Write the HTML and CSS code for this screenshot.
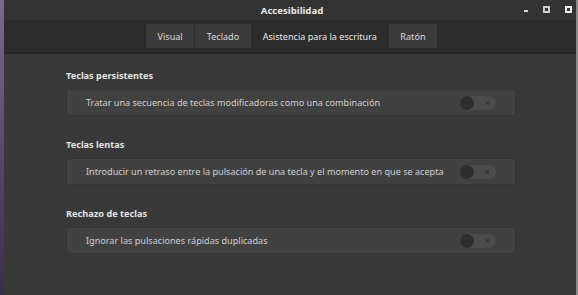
FILE: index.html
```html
<!DOCTYPE html>
<html lang="es">
<head>
  <meta charset="UTF-8" />
  <title>Accesibilidad</title>
  <link rel="stylesheet" href="styles.css">
</head>
<body>
  <div class="escritorio"></div>
  <div class="ventana">
    <div class="titulo">
      <span class="titulo-texto">Accesibilidad</span>
      <div class="controles">
        <span class="ctl-min"></span>
        <span class="ctl-max"></span>
        <span class="ctl-cerrar"></span>
      </div>
    </div>
    <div class="pestanas">
      <button class="tab">Visual</button>
      <button class="tab">Teclado</button>
      <button class="tab activa">Asistencia para la escritura</button>
      <button class="tab">Ratón</button>
    </div>
    <div class="contenido">
      <div class="seccion">
        <h2>Teclas persistentes</h2>
        <div class="fila">
          <span>Tratar una secuencia de teclas modificadoras como una combinación</span>
          <span class="interruptor"><span class="bola"></span><span class="x">×</span></span>
        </div>
      </div>
      <div class="seccion">
        <h2>Teclas lentas</h2>
        <div class="fila">
          <span>Introducir un retraso entre la pulsación de una tecla y el momento en que se acepta</span>
          <span class="interruptor"><span class="bola"></span><span class="x">×</span></span>
        </div>
      </div>
      <div class="seccion">
        <h2>Rechazo de teclas</h2>
        <div class="fila">
          <span>Ignorar las pulsaciones rápidas duplicadas</span>
          <span class="interruptor"><span class="bola"></span><span class="x">×</span></span>
        </div>
      </div>
    </div>
  </div>
</body>
</html>
```

FILE: styles.css
```css
body {
  margin: 0;
  width: 578px;
  height: 295px;
  display: flex;
  overflow: hidden;
  font-family: "Noto Sans", "Open Sans", sans-serif;
  background: #393939;
}

.escritorio {
  width: 4px;
  background: linear-gradient(#7a6a8a, #5a4a6e 50%, #3a2f48);
}

.ventana {
  flex: 1;
  display: flex;
  flex-direction: column;
  background: #393939;
  border-right: 2px solid #8a8a8a;
}

.titulo {
  height: 20px;
  background: #333333;
  display: flex;
  align-items: center;
  justify-content: center;
  position: relative;
}

.titulo-texto {
  color: #e6e6e6;
  font-size: 9.6px;
  font-weight: bold;
  margin-left: 4px;
}

.controles {
  position: absolute;
  right: 4px;
  top: 6px;
  display: flex;
  align-items: center;
  gap: 15px;
}

.ctl-min {
  width: 4px;
  height: 2px;
  background: #dddddd;
  margin-top: 3px;
}

.ctl-max, .ctl-cerrar {
  width: 3px;
  height: 3px;
  border: 2px solid #cfcfcf;
}

.ctl-cerrar { border-color: #eeeeee; }

.pestanas {
  height: 32px;
  background: #2b2b2b;
  border-bottom: 2px solid #262626;
  display: flex;
  align-items: center;
  justify-content: center;
  gap: 1px;
  padding-left: 3px;
}

.tab {
  font-family: inherit;
  font-size: 9.1px;
  color: #d8d8d8;
  background: #3b3b3b;
  border: none;
  height: 24px;
  padding: 0 11.5px;
}

.tab.activa {
  background: transparent;
  color: #e8e8e8;
  padding: 0 11px;
}

.contenido {
  padding: 15px 0 0 62px;
}

.seccion {
  width: 450px;
  margin-bottom: 22px;
}

h2 {
  margin: 0 0 7px 0;
  font-size: 9.2px;
  font-weight: bold;
  color: #e2e2e2;
}

.fila {
  height: 25px;
  background: #414141;
  border: 1px solid #353535;
  display: flex;
  align-items: center;
  justify-content: space-between;
  padding: 0 19px 0 19px;
  font-size: 9.1px;
  color: #cfcfcf;
}

.interruptor {
  width: 36px;
  height: 14px;
  border-radius: 7px;
  background: #4b4b4b;
  display: flex;
  align-items: center;
  justify-content: space-between;
  padding-right: 6px;
  box-sizing: border-box;
}

.bola {
  width: 14px;
  height: 14px;
  border-radius: 50%;
  background: #2e2e2e;
}

.x {
  color: #2e2e2e;
  font-size: 9px;
  font-weight: bold;
  line-height: 1;
}
```
